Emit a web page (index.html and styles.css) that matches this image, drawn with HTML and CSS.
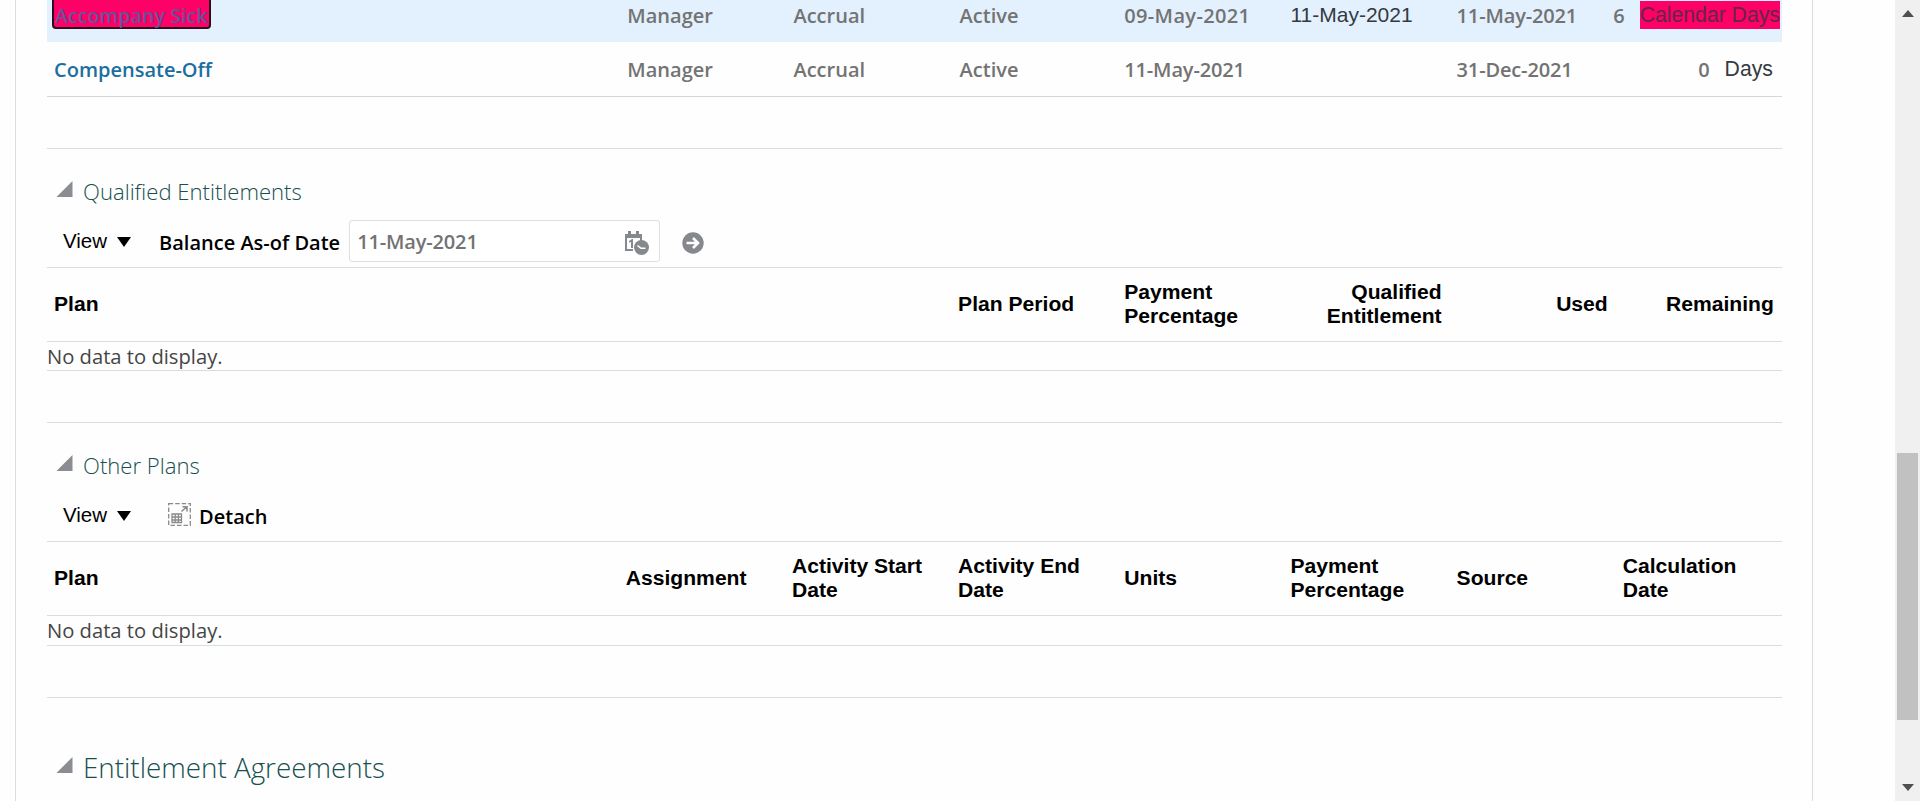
FILE: index.html
```
<!DOCTYPE html>
<html lang="en">
<head>
<meta charset="utf-8">
<title>Absence Records</title>
<link rel="stylesheet" href="styles.css">
</head>
<body>
<div class="page">
  <main class="card">
    <section class="plan-table">
      <div class="grid row selected">
        <div><a class="link focused">Accompany Sick</a></div>
        <div class="text">Manager</div><div class="text">Accrual</div><div class="text">Active</div>
        <div class="date wide">09-May-2021</div>
        <div class="plain">11-May-2021</div>
        <div class="date">11-May-2021</div>
        <div class="balance tight"><span>6</span><span class="plain unit marked">Calendar Days</span></div>
      </div>
      <div class="grid row">
        <div><a class="link">Compensate-Off</a></div>
        <div class="text">Manager</div><div class="text">Accrual</div><div class="text">Active</div>
        <div class="date">11-May-2021</div>
        <div></div>
        <div class="date">31-Dec-2021</div>
        <div class="balance"><span>0</span><span class="plain unit">Days</span></div>
      </div>
    </section>

    <section class="section">
      <h3 class="heading"><svg class="disclose" viewBox="0 0 16 16"><path d="M16 0V16H0Z"/></svg>Qualified Entitlements</h3>
      <div class="toolbar">
        <button class="view">View<svg class="caret" viewBox="0 0 14 10"><path d="M0 0H14L7 10Z"/></svg></button>
        <label class="label">Balance As-of Date</label>
        <div class="field">
          <span>11-May-2021</span>
          <svg class="calendar" viewBox="0 0 24 24">
            <path fill="#85898d" d="M0 3H3V0H6V3H11V0H14V3H17V10H15V7H2V18H8V20H0Z"/>
            <path fill="#85898d" d="M4 10L7 8H8V17H6V11L4 11.500Z"/>
            <circle cx="16.500" cy="16.500" r="7.500" fill="#85898d"/>
            <path d="M12.500 14.500L16 17.300H20.500" fill="none" stroke="#fff" stroke-width="1.600"/>
          </svg>
        </div>
        <svg class="go" viewBox="0 0 22 22">
          <circle cx="11" cy="11" r="10.700" fill="#85898d"/>
          <path d="M4.500 11H15.500M11 6L16 11L11 16" fill="none" stroke="#fff" stroke-width="2.600"/>
        </svg>
      </div>
      <div class="grid head">
        <div class="span-plan">Plan</div>
        <div>Plan Period</div>
        <div>Payment<br>Percentage</div>
        <div class="right">Qualified<br>Entitlement</div>
        <div class="right">Used</div>
        <div class="right">Remaining</div>
      </div>
      <div class="empty">No data to display.</div>
    </section>

    <section class="section">
      <h3 class="heading"><svg class="disclose" viewBox="0 0 16 16"><path d="M16 0V16H0Z"/></svg>Other Plans</h3>
      <div class="toolbar">
        <button class="view">View<svg class="caret" viewBox="0 0 14 10"><path d="M0 0H14L7 10Z"/></svg></button>
        <button class="detach">
          <svg class="detach-icon" viewBox="0 0 23 23" fill="none" stroke="#8b8b8b">
            <path stroke-width="1.300" stroke-dasharray="4.500 2" d="M.7 .7H22.300V22.300H.7Z"/>
            <path stroke-width="1.300" d="M4 11H13.500V19.500H4ZM4 14H13.500M4 17H13.500M7.200 11V19.500M10.400 11V19.500"/>
            <path stroke-width="1.500" d="M13.500 8.500L18.500 4M14.500 3.800H19V8.500"/>
          </svg>
          <span>Detach</span>
        </button>
      </div>
      <div class="grid head">
        <div>Plan</div>
        <div>Assignment</div>
        <div>Activity Start<br>Date</div>
        <div>Activity End<br>Date</div>
        <div>Units</div>
        <div>Payment<br>Percentage</div>
        <div>Source</div>
        <div>Calculation<br>Date</div>
      </div>
      <div class="empty tall">No data to display.</div>
    </section>

    <section class="section">
      <h2 class="heading large"><svg class="disclose" viewBox="0 0 16 16"><path d="M16 0V16H0Z"/></svg>Entitlement Agreements</h2>
    </section>
  </main>

  <aside class="scrollbar">
    <svg class="arrow" viewBox="0 0 12 7"><path d="M6 0L12 7H0Z"/></svg>
    <div class="thumb"></div>
    <svg class="arrow" viewBox="0 0 12 7"><path d="M0 0H12L6 7Z"/></svg>
  </aside>
</div>
</body>
</html>
```
FILE: styles.css
```
* { box-sizing: border-box; }

body {
  margin: 0;
  background: #fefefe;
  font-family: "Open Sans", "Noto Sans", sans-serif;
  font-size: 20px;
  color: #000;
}

svg { display: block; flex: none; }

button {
  border: 0;
  padding: 0;
  background: none;
  font: inherit;
  color: inherit;
}

.page {
  display: flex;
  justify-content: space-between;
  height: 801px;
  overflow: hidden;
}

.card {
  width: 1798px;
  margin-left: 15px;
  padding: 0 30px 0 31px;
  border: solid #d7dee1;
  border-width: 0 1px;
}

.grid {
  display: grid;
  grid-template-columns: 571.800px repeat(7, 166.170px);
  align-items: center;
  white-space: nowrap;
}

.grid > div { padding: 0 8px 0 7px; }

.plan-table {
  margin-top: -12px;
  margin-bottom: 51px;
  border-bottom: 1px solid #d2d9dd;
}

.row {
  height: 54px;
  padding-top: 1px;
  line-height: 28px;
  font-weight: 600;
  color: #737373;
}

.grid > .text { padding-left: 8.500px; }

.selected { background: #e3f0fd; }

.link { color: #1b6f9f; }

.focused {
  display: inline-block;
  width: 159px;
  height: 32px;
  margin: -6px 0 0 -2px;
  padding: 5px 0 0 1px;
  border: 2px solid #2b0b1c;
  border-radius: 4px;
  font-size: 19.700px;
  line-height: 23px;
  background: #ff0066;
  color: #65529a;
}

.date { letter-spacing: -0.150px; }
.date.wide { letter-spacing: 0.350px; }

.plain {
  font: 400 21px/28px "Liberation Sans", Arial, sans-serif;
  color: #333a40;
  position: relative;
  top: -1px;
}

.grid > .balance {
  display: flex;
  justify-content: flex-end;
  gap: 15px;
  padding-right: 9px;
}

.grid > .balance.tight { padding-right: 2px; }

.unit { font-size: 21.200px; }

.marked {
  background: #ff0066;
  color: #632746;
}

.section { border-top: 1px solid #d7dee1; }

.heading {
  display: flex;
  align-items: center;
  gap: 10px;
  margin: 0;
  padding: 27px 0 0 9px;
  font-size: 22.100px;
  line-height: 30px;
  font-weight: 300;
  color: #17504f;
}

.heading.large {
  padding-top: 50px;
  font-size: 27.800px;
  line-height: 38px;
}

.disclose {
  width: 17px;
  height: 16px;
  margin-top: -5px;
  fill: #8a8d91;
}

.toolbar {
  display: flex;
  align-items: center;
  height: 61px;
  padding: 14px 0 5px 16px;
}

.view {
  display: flex;
  align-items: center;
  gap: 10px;
  margin-top: -1px;
  font: 400 20.500px/28px "Liberation Sans", Arial, sans-serif;
}

.caret {
  width: 14px;
  height: 10px;
  margin-top: 3px;
}

.label {
  margin-left: 28px;
  padding-top: 2px;
  font-weight: 600;
}

.field {
  display: flex;
  align-items: center;
  justify-content: space-between;
  width: 311px;
  height: 42px;
  margin-left: 9px;
  padding: 1px 10px 0 7px;
  border: 1px solid #dce0e3;
  border-radius: 3px;
  background: #fff;
  font-weight: 600;
  letter-spacing: -0.150px;
  color: #737373;
}

.calendar {
  width: 24px;
  height: 24px;
  margin-top: 2px;
}

.go {
  width: 22px;
  height: 22px;
  margin: 3px 0 0 22px;
}

.detach {
  display: flex;
  align-items: center;
  gap: 8px;
  margin: -1px 0 0 37px;
  font-weight: 600;
}

.detach span { padding-top: 3px; }

.detach-icon {
  width: 23px;
  height: 23px;
}

.head {
  height: 75px;
  padding-bottom: 2px;
  border: solid #d7dee1;
  border-width: 1px 0;
  font: 700 21.100px/24px "Liberation Sans", Arial, sans-serif;
}

.span-plan { grid-column: span 3; }

.right { text-align: right; }

.empty {
  height: 29px;
  margin-bottom: 51px;
  border-bottom: 1px solid #d7dee1;
  font-size: 20.200px;
  line-height: 28px;
  color: #454545;
}

.empty.tall { height: 30px; }

.scrollbar {
  display: flex;
  flex-direction: column;
  align-items: center;
  justify-content: space-between;
  width: 25px;
  padding: 10px 0;
  background: #f0f0f0;
}

.arrow {
  width: 12px;
  height: 7px;
  fill: #505050;
}

.thumb {
  width: 21px;
  height: 267px;
  margin-top: 371px;
  background: #c1c1c1;
}
```
